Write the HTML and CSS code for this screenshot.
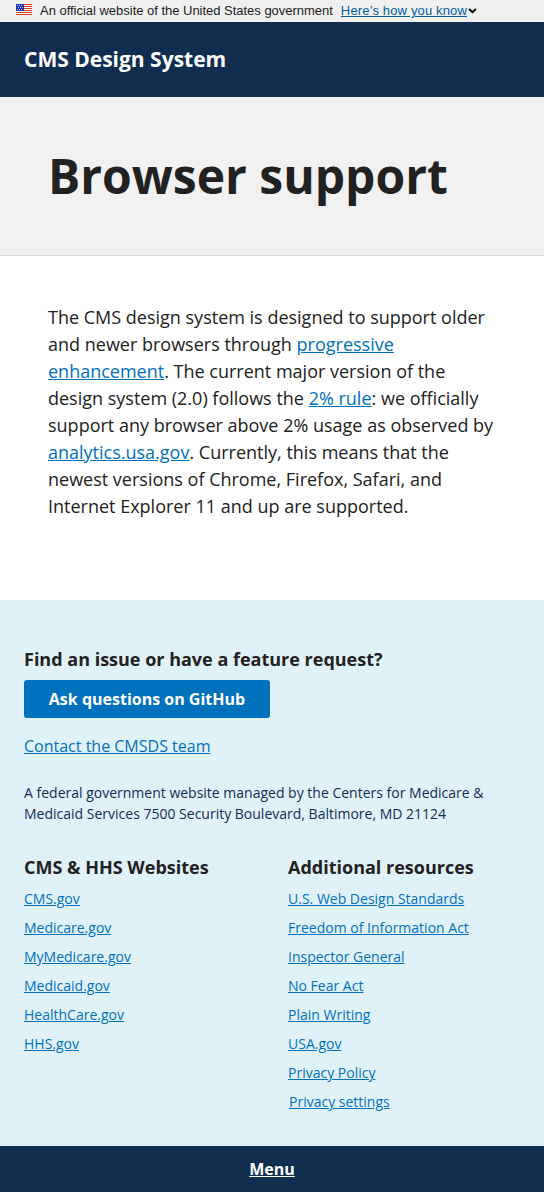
FILE: index.html
```html
<!DOCTYPE html>
<html lang="en">
<head>
<meta charset="utf-8">
<title>Browser support - CMS Design System</title>
<link rel="stylesheet" href="styles.css">
</head>
<body>
<div class="banner">
  <svg class="flag" width="16" height="11" viewBox="0 0 16 11" aria-hidden="true">
    <path fill="#fff" d="M0 0h16v11H0z"/>
    <path fill="#db3e1f" d="M0 0h16v1H0zM0 2h16v1H0zM0 4h16v1H0zM0 6h16v1H0zM0 8h16v1H0zM0 10h16v1H0z"/>
    <path fill="#1e33b1" d="M0 0h8v7H0z"/>
    <path fill="#c5caed" d="M1 1h1v1H1zM3 1h1v1H3zM5 1h1v1H5zM2 3h1v1H2zM4 3h1v1H4zM6 3h1v1H6zM1 5h1v1H1zM3 5h1v1H3zM5 5h1v1H5z"/>
  </svg>
  <span class="banner-text">An official website of the United States government</span>
  <a class="banner-link" href="#">Here’s how you know</a>
  <svg class="chevron" width="9" height="6" viewBox="0 0 9 6" aria-hidden="true"><path d="M1.1 1l3.4 3.2L7.9 1" fill="none" stroke="#000" stroke-width="2"/></svg>
</div>
<header class="site-header">CMS Design System</header>
<div class="hero"><h1>Browser support</h1></div>
<main>
  <p>The CMS design system is designed to support older and newer browsers through <a href="#">progressive enhancement</a>. The current major version of the design system (2.0) follows the <a href="#">2% rule</a>: we officially support any browser above 2% usage as observed by <a href="#">analytics.usa.gov</a>. Currently, this means that the newest versions of Chrome, Firefox, Safari, and Internet Explorer 11 and up are supported.</p>
</main>
<footer>
  <h2>Find an issue or have a feature request?</h2>
  <a class="button" href="#">Ask questions on GitHub</a>
  <a class="contact" href="#">Contact the CMSDS team</a>
  <p class="address">A federal government website managed by the Centers for Medicare &amp; Medicaid Services 7500 Security Boulevard, Baltimore, MD 21124</p>
  <div class="columns">
    <section>
      <h2>CMS &amp; HHS Websites</h2>
      <ul>
        <li><a href="#">CMS.gov</a></li>
        <li><a href="#">Medicare.gov</a></li>
        <li><a href="#">MyMedicare.gov</a></li>
        <li><a href="#">Medicaid.gov</a></li>
        <li><a href="#">HealthCare.gov</a></li>
        <li><a href="#">HHS.gov</a></li>
      </ul>
    </section>
    <section>
      <h2>Additional resources</h2>
      <ul>
        <li><a href="#">U.S. Web Design Standards</a></li>
        <li><a href="#">Freedom of Information Act</a></li>
        <li><a href="#">Inspector General</a></li>
        <li><a href="#">No Fear Act</a></li>
        <li><a href="#">Plain Writing</a></li>
        <li><a href="#">USA.gov</a></li>
        <li><a href="#">Privacy Policy</a></li>
        <li class="settings"><a href="#">Privacy settings</a></li>
      </ul>
    </section>
  </div>
</footer>
<nav class="menu-bar"><a href="#">Menu</a></nav>
</body>
</html>
```
FILE: styles.css
```css
* { box-sizing: border-box; }
body { margin: 0; font: 18px/27px "Open Sans", sans-serif; color: #212121; background: #fff; }
h1, h2, p, ul { margin: 0; padding: 0; }
a { color: #0071bc; text-decoration: underline; }
.banner { height: 22px; padding: 0 16px; display: flex; align-items: center; background: #f0f0f0; color: #1b1b1b; font: 13px/20px "Liberation Sans", Arial, sans-serif; white-space: nowrap; }
.flag { margin: -3px 8px 0 0; }
.banner-text { letter-spacing: -0.02px; }
.banner-link { margin-left: 8px; color: #005ea2; letter-spacing: 0.15px; }
.chevron { margin-left: 1px; }
.site-header { height: 75px; padding: 22px 24px; background: #112e51; color: #fff; font-size: 21px; line-height: 30px; font-weight: 700; }
.hero { height: 159px; padding: 48px; background: #f1f1f1; border-bottom: 1px solid #d6d7d9; }
h1 { font-size: 48px; line-height: 62px; font-weight: 700; }
main { height: 344px; padding: 48px; }
footer { height: 546px; padding: 46px 24px 0; background: #e1f1f8; }
h2 { font-size: 18px; line-height: 27px; font-weight: 700; }
.button { display: block; width: 246px; height: 38px; margin-top: 7px; border-radius: 3px; background: #0071bc; color: #fff; font-size: 16px; line-height: 38px; font-weight: 700; text-align: center; text-decoration: none; }
.contact { display: block; margin-top: 16px; font-size: 16px; line-height: 24px; }
.address { margin-top: 24px; color: #112e51; font-size: 14px; line-height: 21px; }
.columns { display: grid; grid-template-columns: 1fr 1fr; column-gap: 32px; margin-top: 30px; }
ul { list-style: none; margin-top: 7px; }
li { height: 21px; margin-bottom: 8px; font-size: 14px; line-height: 21px; }
.settings { padding-left: 1px; }
.menu-bar { height: 46px; background: #112e51; text-align: center; font-size: 16px; line-height: 46px; font-weight: 700; }
.menu-bar a { color: #fff; }
```
